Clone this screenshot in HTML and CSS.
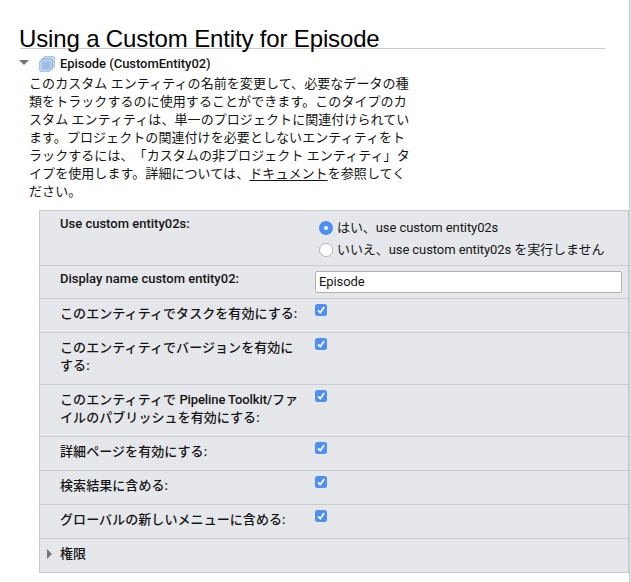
FILE: index.html
```html
<!DOCTYPE html>
<html lang="ja">
<head>
<meta charset="utf-8">
<title>Using a Custom Entity for Episode</title>
<link rel="stylesheet" href="styles.css">
</head>
<body>
<main class="page">
  <h1 class="title">Using a Custom Entity for Episode</h1>
  <div class="entity">
    <span class="arrow-down"></span>
    <svg class="entity-icon" width="17" height="17" viewBox="0 0 17 17">
      <rect x="4.5" y=".5" width="11" height="11" rx="1.5" fill="#cfe0f4" stroke="#a3c0e4"/>
      <rect x="2.5" y="2.5" width="11" height="11" rx="1.5" fill="#b9d0ed" stroke="#93b4de"/>
      <rect x=".5" y="4.5" width="11" height="11" rx="1.5" fill="#b3cceb" fill-opacity=".8" stroke="#a9c5e8"/>
      <path d="M4 6h7v7H4z" fill="#8fb1de" fill-opacity=".6"/>
    </svg>
    <span class="entity-name">Episode (CustomEntity02)</span>
  </div>
  <p class="description">このカスタム エンティティの名前を変更して、必要なデータの種<br>類をトラックするのに使用することができます。このタイプのカ<br>スタム エンティティは、単一のプロジェクトに関連付けられてい<br>ます。プロジェクトの関連付けを必要としないエンティティをト<br>ラックするには、「カスタムの非プロジェクト エンティティ」タ<br>イプを使用します。詳細については、<a class="link">ドキュメント</a>を参照してく<br>ださい。</p>
  <section class="settings">
    <div class="row row-use">
      <div class="label latin">Use custom entity02s:</div>
      <div class="options">
        <label class="option"><span class="radio checked"></span><span>はい、use custom entity02s</span></label>
        <label class="option"><span class="radio"></span><span>いいえ、use custom entity02s を実行しません</span></label>
      </div>
    </div>
    <div class="row row-name">
      <div class="label latin">Display name custom entity02:</div>
      <input class="name-input" type="text" value="Episode">
    </div>
    <div class="row">
      <div class="label">このエンティティでタスクを有効にする:</div>
      <span class="checkbox"><svg width="12" height="12" viewBox="0 0 12 12"><path d="M3 6.4l2.2 2.3L9.2 3"/></svg></span>
    </div>
    <div class="row row-double">
      <div class="label">このエンティティでバージョンを有効に<br>する:</div>
      <span class="checkbox"><svg width="12" height="12" viewBox="0 0 12 12"><path d="M3 6.4l2.2 2.3L9.2 3"/></svg></span>
    </div>
    <div class="row row-double">
      <div class="label">このエンティティで <span class="pipeline">Pipeline Toolkit/</span>ファ<br>イルのパブリッシュを有効にする:</div>
      <span class="checkbox"><svg width="12" height="12" viewBox="0 0 12 12"><path d="M3 6.4l2.2 2.3L9.2 3"/></svg></span>
    </div>
    <div class="row">
      <div class="label">詳細ページを有効にする:</div>
      <span class="checkbox"><svg width="12" height="12" viewBox="0 0 12 12"><path d="M3 6.4l2.2 2.3L9.2 3"/></svg></span>
    </div>
    <div class="row">
      <div class="label">検索結果に含める:</div>
      <span class="checkbox"><svg width="12" height="12" viewBox="0 0 12 12"><path d="M3 6.4l2.2 2.3L9.2 3"/></svg></span>
    </div>
    <div class="row">
      <div class="label">グローバルの新しいメニューに含める:</div>
      <span class="checkbox"><svg width="12" height="12" viewBox="0 0 12 12"><path d="M3 6.4l2.2 2.3L9.2 3"/></svg></span>
    </div>
    <div class="row row-permissions">
      <span class="arrow-right"></span>
      <div class="label">権限</div>
    </div>
  </section>
</main>
</body>
</html>
```
FILE: styles.css
```css
* { box-sizing: border-box; }
html { background: #e6e7eb; }
body {
  margin: 0;
  color: #151515;
  font: 13px/18px Roboto, "Noto Sans CJK JP", sans-serif;
  text-spacing-trim: space-all;
  overflow: hidden;
}
.page {
  width: 630px;
  height: 582px;
  padding-top: 21px;
  background: #fff;
  border-right: 1px solid #cacbd0;
}
.title {
  width: 585px;
  height: 28px;
  margin: 0 0 0 20px;
  border-bottom: 1px solid #cacaca;
  color: #000;
  font: 400 24px/36px "Liberation Sans", sans-serif;
  letter-spacing: -.15px;
  text-indent: -1px;
  white-space: nowrap;
}
.entity {
  display: flex;
  align-items: center;
  height: 25px;
  padding: 5px 0 0 19px;
}
.arrow-down {
  margin: -4px 10px 0 0;
  border: 5px solid transparent;
  border-top-color: #757575;
  border-bottom: 0;
}
.entity-icon { margin: 0 4px 0 0; }
.entity-name { font-weight: 500; letter-spacing: -.04px; }
.description {
  width: 390px;
  margin: 1px 0 9px 29px;
  letter-spacing: .07px;
  white-space: nowrap;
}
.link { text-decoration: underline; text-decoration-thickness: 1px; text-underline-offset: 2px; }
.settings {
  width: 590px;
  margin-left: 39px;
  background: #e6e7eb;
  border: 1px solid #cacbd0;
  border-bottom: 0;
}
.row {
  display: flex;
  align-items: flex-start;
  height: 34px;
  padding: 6px 6px 0 20px;
  border-bottom: 1px solid #cacbd0;
}
.row-use { height: 55px; padding-top: 4px; }
.row-name { height: 33px; padding-top: 4px; }
.row-double { height: 52px; }
.label {
  flex: 0 0 255px;
  font-weight: 500;
  letter-spacing: .07px;
  white-space: nowrap;
}
.label.latin { letter-spacing: 0; }
.pipeline { letter-spacing: -.1px; }
.checkbox {
  width: 12px;
  height: 12px;
  margin-top: -1px;
  border-radius: 2.5px;
  background: #4e8ff7;
}
.checkbox svg { display: block; }
.checkbox path { fill: none; stroke: #fff; stroke-width: 1.7; }
.options { padding: 2px 0 0 4px; letter-spacing: -.08px; }
.option { display: flex; align-items: center; height: 22px; white-space: nowrap; }
.radio {
  width: 14px;
  height: 14px;
  margin-right: 4px;
  border: 1px solid #b6b6b6;
  border-radius: 50%;
  background: #fff;
}
.radio.checked { border: 5px solid #4e8ff7; }
.name-input {
  width: 307px;
  height: 22px;
  margin-top: 1px;
  padding: 0 3px 2px;
  border: 1px solid #afb0b4;
  border-radius: 2px;
  background: #fff;
  color: #151515;
  font: inherit;
  letter-spacing: -.08px;
}
.row-permissions { padding-left: 7px; }
.arrow-right {
  margin: 4px 8px 0 0;
  border: 5px solid transparent;
  border-left-color: #757575;
  border-right: 0;
}
```
